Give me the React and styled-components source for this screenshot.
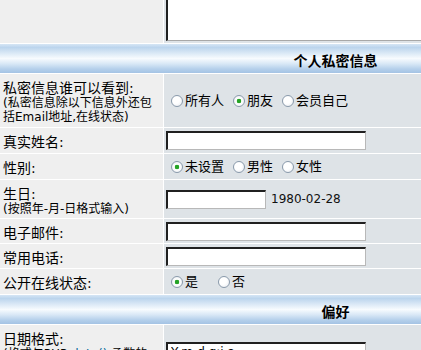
import React from 'react';
import styled, { createGlobalStyle } from 'styled-components';

const GlobalStyle = createGlobalStyle`
  html, body {
    margin: 0;
    padding: 0;
    background: #fff;
    overflow: hidden;
  }
  body {
    font-family: "DejaVu Sans", "Noto Sans CJK SC", sans-serif;
    color: #000;
  }
`;

const Form = styled.div`
  display: grid;
  grid-template-columns: 163px 507px;
  gap: 1px;
  width: 671px;
  background: #fff;
`;

const CatHead = styled.div`
  grid-column: 1 / -1;
  height: 29px;
  box-sizing: border-box;
  padding-top: 2px;
  display: flex;
  align-items: center;
  justify-content: center;
  font-size: 14px;
  font-weight: bold;
  background: linear-gradient(
    to bottom,
    #d6e6f5 0%,
    #bcd5ed 12%,
    #dbe9f6 32%,
    #f7fbfe 50%,
    #d9e8f6 68%,
    #b5d0eb 86%,
    #a4c3e4 100%
  );
`;

const Label = styled.div`
  background: #efefef;
  min-height: ${p => p.$h}px;
  box-sizing: border-box;
  padding: 3px 3px 0;
  display: flex;
  flex-direction: column;
  justify-content: center;
`;

const Main = styled.span`
  font-size: 14px;
  line-height: 16px;
`;

const Note = styled.span`
  font-size: 12px;
  line-height: 14px;
`;

const Link = styled.span`
  color: #006699;
`;

const Value = styled.div`
  background: #dee3e7;
  padding: ${p => (p.$top ? '0 2px 2px' : '0 2px')};
  display: flex;
  align-items: ${p => (p.$top ? 'flex-start' : 'center')};
  font-size: 13px;
`;

const TextArea = styled.textarea`
  box-sizing: border-box;
  width: 460px;
  height: 41px;
  margin: 0;
  padding: 0;
  resize: none;
  background: #fff;
  border-style: solid;
  border-width: 0 1px 1px 2px;
  border-color: #202020 #b4b4b4 #a8a8a8 #202020;
`;

const TextInput = styled.input`
  box-sizing: border-box;
  width: ${p => p.$w || 200}px;
  height: 19px;
  margin: 0;
  padding: 0 3px;
  background: #fff;
  border-style: solid;
  border-width: 2px 1px 1px 2px;
  border-color: #202020 #b8b8b8 #b8b8b8 #202020;
  font: 12px "DejaVu Sans", sans-serif;
  color: #000;
  outline: none;
`;

const Hint = styled.span`
  margin-left: 5px;
  font: 12px "DejaVu Sans", sans-serif;
  color: #111;
`;

const Option = styled.label`
  display: inline-flex;
  align-items: center;
  font-size: 13px;
  line-height: 16px;
  margin-right: ${p => p.$gap ?? 4}px;
`;

const Radio = styled.input.attrs({ type: 'radio' })`
  appearance: none;
  box-sizing: border-box;
  width: 12px;
  height: 12px;
  margin: 0 2px 0 5px;
  border: 1px solid #8a9aab;
  border-radius: 50%;
  background: radial-gradient(circle at 40% 40%, #ffffff 0 40%, #e4e8ee 100%);
  &:checked {
    background: radial-gradient(circle, #26a326 0 2px, #ffffff 2.6px, #e8ecf0 100%);
  }
`;

const RadioGroup = ({ name, options, checked, gap }) => (
  <>
    {options.map(o => (
      <Option key={o} $gap={gap}>
        <Radio name={name} defaultChecked={o === checked} />
        {o}
      </Option>
    ))}
  </>
);

export default function App() {
  return (
    <>
      <GlobalStyle />
      <Form>
        <Label $h={43} />
        <Value $top>
          <TextArea defaultValue="" />
        </Value>

        <CatHead>个人私密信息</CatHead>

        <Label $h={53}>
          <Main>私密信息谁可以看到:</Main>
          <Note>(私密信息除以下信息外还包</Note>
          <Note>括Email地址,在线状态)</Note>
        </Label>
        <Value>
          <RadioGroup name="privacy" options={['所有人', '朋友', '会员自己']} checked="朋友" />
        </Value>

        <Label $h={25}>
          <Main>真实姓名:</Main>
        </Label>
        <Value>
          <TextInput />
        </Value>

        <Label $h={25}>
          <Main>性别:</Main>
        </Label>
        <Value>
          <RadioGroup name="gender" options={['未设置', '男性', '女性']} checked="未设置" />
        </Value>

        <Label $h={38}>
          <Main>生日:</Main>
          <Note>(按照年-月-日格式输入)</Note>
        </Label>
        <Value>
          <TextInput $w={100} />
          <Hint>1980-02-28</Hint>
        </Value>

        <Label $h={24}>
          <Main>电子邮件:</Main>
        </Label>
        <Value>
          <TextInput />
        </Value>

        <Label $h={24}>
          <Main>常用电话:</Main>
        </Label>
        <Value>
          <TextInput />
        </Value>

        <Label $h={25}>
          <Main>公开在线状态:</Main>
        </Label>
        <Value>
          <RadioGroup name="online" options={['是', '否']} checked="是" gap={15} />
        </Value>

        <CatHead>偏好</CatHead>

        <Label $h={53}>
          <Main>日期格式:</Main>
          <Note>
            (格式与PHP <Link>date()</Link> 函数的
          </Note>
          <Note>格式一样)</Note>
        </Label>
        <Value>
          <TextInput defaultValue="Y-m-d g:i a" />
        </Value>
      </Form>
    </>
  );
}
